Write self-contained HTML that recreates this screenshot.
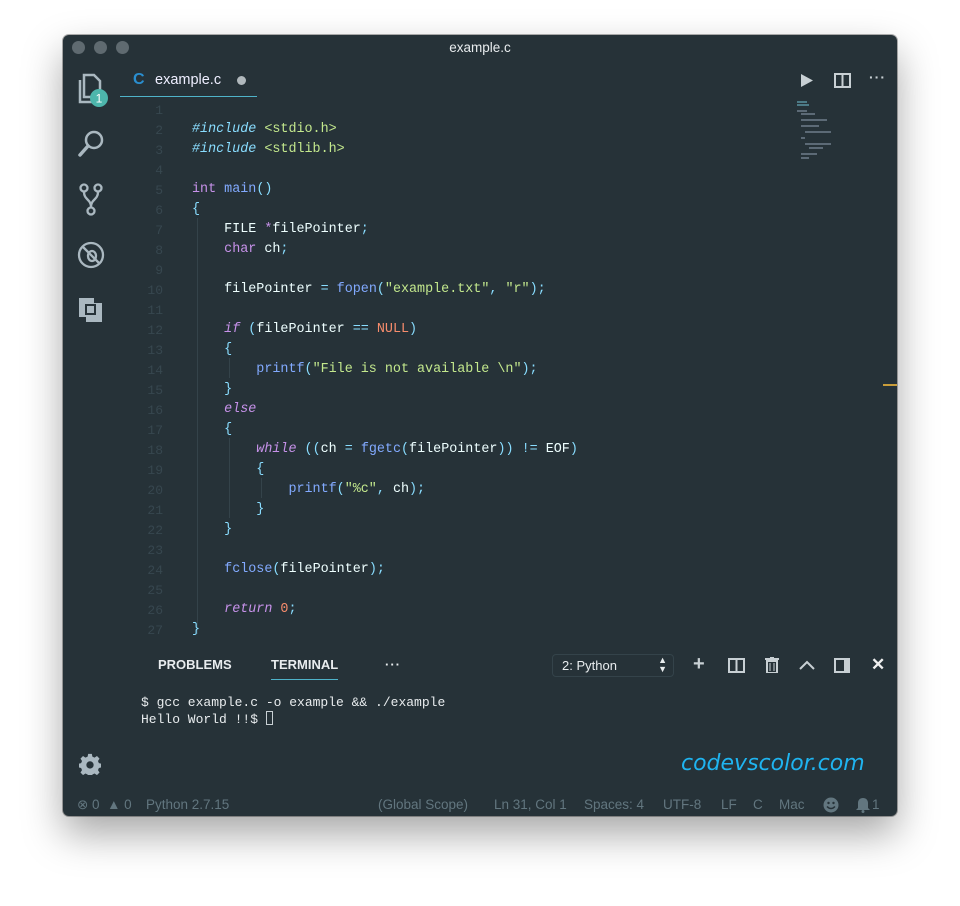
<!DOCTYPE html>
<html><head><meta charset="utf-8"><style>
*{margin:0;padding:0;box-sizing:border-box}
body{width:960px;height:906px;background:#fff;position:relative;overflow:hidden;font-family:"Liberation Sans",sans-serif}
#win{position:absolute;left:63px;top:35px;width:834px;height:781px;background:#263238;border-radius:6px;box-shadow:0 18px 40px rgba(0,0,0,.35),0 0 0 1px rgba(0,0,0,.3);overflow:hidden}
.dot{position:absolute;top:6px;width:13px;height:13px;border-radius:50%;background:#5f6a70}
.title{position:absolute;top:5px;left:0;width:834px;text-align:center;color:#e8ecee;font-size:13.5px}
.ab{position:absolute}
.code{position:absolute;left:0;top:3px;font-family:"Liberation Mono",monospace;font-size:13.4px;color:#eeffff}
.ln{position:absolute;left:60px;width:40px;text-align:right;color:#37474f;font-family:"Liberation Mono",monospace;font-size:13px}
.cl{position:absolute;left:129px;white-space:pre}
.k{color:#c792ea;font-style:italic}.t{color:#c792ea}.c{color:#89ddff}.ci{color:#89ddff;font-style:italic}.s{color:#c3e88d}.f{color:#82aaff}.o{color:#f78c6c}
.guide{position:absolute;width:1px;background:#34434a}
.st{position:absolute;top:762px;color:#62767f;font-size:13.5px}
.ph{position:absolute;top:622px;font-size:13px;font-weight:bold;color:#e8ecee}
.term{position:absolute;left:78px;font-family:"Liberation Mono",monospace;font-size:13px;color:#e8ecee;white-space:pre}
</style></head><body>
<div id="win">
<div class="dot" style="left:9px"></div><div class="dot" style="left:31px"></div><div class="dot" style="left:53px"></div>
<div class="title">example.c</div>

<svg class="ab" style="left:14px;top:36px" width="34" height="40" viewBox="0 0 34 40"><path d="M7 4h10l6 6v16H7z M3 9v22h16" fill="none" stroke="#aab8c0" stroke-width="2.5"/><circle cx="22" cy="27" r="9" fill="#4db6ac"/><text x="22" y="31.5" font-size="12" fill="#fff" text-anchor="middle" font-family="Liberation Sans">1</text></svg>
<svg class="ab" style="left:14px;top:94px" width="30" height="30"><circle cx="17" cy="11" r="8" fill="none" stroke="#aab8c0" stroke-width="2.5"/><path d="M11 17L3 26" stroke="#aab8c0" stroke-width="3.5" stroke-linecap="round"/></svg>
<svg class="ab" style="left:16px;top:148px" width="26" height="34"><g fill="none" stroke="#aab8c0" stroke-width="2.3"><circle cx="5" cy="5" r="3.5"/><circle cx="19" cy="5" r="3.5"/><circle cx="12" cy="28" r="3.5"/><path d="M5 9c0 8 7 7 7 15M19 9c0 8-7 7-7 15"/></g></svg>
<svg class="ab" style="left:14px;top:206px" width="28" height="28"><g fill="none" stroke="#aab8c0" stroke-width="2.3"><circle cx="14" cy="14" r="12"/><path d="M5 5l18 18"/><ellipse cx="15" cy="15" rx="4" ry="5"/></g></svg>
<svg class="ab" style="left:15px;top:262px" width="26" height="26"><path d="M1 1h15v5h8v19H8v-5H1z" fill="#aab8c0"/><rect x="7" y="7" width="11" height="11" fill="#263238"/><rect x="9" y="9" width="7" height="7" fill="#aab8c0"/></svg>
<svg class="ab" style="left:16px;top:718px" width="22" height="22" viewBox="0 0 24 24"><path fill="#aab8c0" d="M10 1h4l.6 3 2.4 1 2.6-1.7 2.8 2.8L20.7 8.7l1 2.4 3 .6v4l-3 .6-1 2.4 1.7 2.6-2.8 2.8-2.6-1.7-2.4 1-.6 3h-4l-.6-3-2.4-1-2.6 1.7-2.8-2.8 1.7-2.6-1-2.4-3-.6v-4l3-.6 1-2.4L1.6 6.1 4.4 3.3 7 5l2.4-1z"/><circle cx="12" cy="13" r="4" fill="#263238"/></svg>

<div style="position:absolute;left:70px;top:36px;font-size:16px;font-weight:bold;color:#2a8fd0">C</div>
<div style="position:absolute;left:92px;top:37px;font-size:14.5px;color:#eef">example.c</div>
<div style="position:absolute;left:174px;top:41px;width:9px;height:9px;border-radius:50%;background:#b0b8bc"></div>
<div style="position:absolute;left:57px;top:61px;width:137px;height:1px;background:#4fb3c9"></div>
<svg style="position:absolute;left:737px;top:38px" width="14" height="15"><path d="M1 1l12 6.5L1 14z" fill="#c8d0d4"/></svg>
<svg style="position:absolute;left:771px;top:38px" width="17" height="15"><path d="M1 1h15v13H1zM8.5 1v13" fill="none" stroke="#c8d0d4" stroke-width="2"/></svg>
<div style="position:absolute;left:806px;top:34px;color:#c8d0d4;font-size:14px;font-weight:bold;letter-spacing:1px">···</div>
<div style="position:absolute;left:820px;top:349px;width:14px;height:2px;background:#c99d3a"></div>

<svg style="position:absolute;left:734px;top:64px" width="60" height="64"><g fill="#8090a0" opacity=".6"><rect x="0" y="2" width="10" height="2" fill="#6ab"/><rect x="0" y="5" width="12" height="2" fill="#6ab"/><rect x="0" y="11" width="10" height="2"/><rect x="4" y="14" width="14" height="2"/><rect x="4" y="20" width="26" height="2"/><rect x="4" y="26" width="18" height="2"/><rect x="8" y="32" width="26" height="2"/><rect x="4" y="38" width="4" height="2"/><rect x="8" y="44" width="26" height="2"/><rect x="12" y="48" width="14" height="2"/><rect x="4" y="54" width="16" height="2"/><rect x="4" y="58" width="8" height="2"/></g></svg>

<div class="guide" style="left:134px;top:183px;height:416px"></div>
<div class="guide" style="left:166px;top:323px;height:20px"></div>
<div class="guide" style="left:166px;top:403px;height:80px"></div>
<div class="guide" style="left:198px;top:443px;height:20px"></div>
<div class="code" id="code"></div>

<div class="ph" style="left:95px">PROBLEMS</div>
<div class="ph" style="left:208px">TERMINAL</div>
<div style="position:absolute;left:208px;top:644px;width:67px;height:1px;background:#4fb3c9"></div>
<div class="ph" style="left:322px;letter-spacing:1px">···</div>
<div style="position:absolute;left:489px;top:619px;width:122px;height:23px;border:1px solid #34434a;border-radius:4px;color:#e8ecee;font-size:13px;padding:3px 9px">2: Python<span style="position:absolute;right:6px;top:1px;font-size:9px;line-height:9px">▲<br>▼</span></div>
<div style="position:absolute;left:630px;top:618px;color:#c8d0d4;font-size:20px;font-weight:bold">+</div>
<svg style="position:absolute;left:665px;top:623px" width="17" height="15"><path d="M1 1h15v13H1zM8.5 1v13" fill="none" stroke="#c8d0d4" stroke-width="2"/></svg>
<svg style="position:absolute;left:702px;top:622px" width="14" height="16"><path d="M0 2h14M5 0h4M2 4h10v12H2z" stroke="#c8d0d4" stroke-width="2" fill="none"/><path d="M5 6v8M9 6v8" stroke="#c8d0d4"/></svg>
<svg style="position:absolute;left:736px;top:625px" width="16" height="10"><path d="M1 9l7-7 7 7" fill="none" stroke="#c8d0d4" stroke-width="2"/></svg>
<svg style="position:absolute;left:771px;top:623px" width="16" height="15"><path d="M1 1h14v13H1z" fill="none" stroke="#c8d0d4" stroke-width="2"/><rect x="10" y="1" width="5" height="13" fill="#c8d0d4"/></svg>
<div style="position:absolute;left:808px;top:620px;color:#f0f0f0;font-size:17px;font-weight:bold">✕</div>
<div class="term" style="top:660px">$ gcc example.c -o example &amp;&amp; ./example</div>
<div class="term" style="top:676px">Hello World !!$ <span style="display:inline-block;width:7px;height:14px;border:1px solid #c8d0d4;vertical-align:-2px"></span></div>
<div style="position:absolute;left:618px;top:716px;color:#1fb4f0;font-size:22px;font-family:'DejaVu Sans',cursive;font-style:italic">codevscolor.com</div>

<div class="st" style="left:14px">⊗ 0 &nbsp;▲ 0</div>
<div class="st" style="left:83px">Python 2.7.15</div>
<div class="st" style="left:315px">(Global Scope)</div>
<div class="st" style="left:431px">Ln 31, Col 1</div>
<div class="st" style="left:521px">Spaces: 4</div>
<div class="st" style="left:600px">UTF-8</div>
<div class="st" style="left:658px">LF</div>
<div class="st" style="left:690px">C</div>
<div class="st" style="left:716px">Mac</div>
<svg style="position:absolute;left:760px;top:762px" width="16" height="16"><circle cx="8" cy="8" r="7.5" fill="#62767f"/><circle cx="5.5" cy="6" r="1.2" fill="#263238"/><circle cx="10.5" cy="6" r="1.2" fill="#263238"/><path d="M4 9.5q4 4 8 0" stroke="#263238" stroke-width="1.5" fill="none"/></svg>
<svg style="position:absolute;left:793px;top:762px" width="14" height="16"><path d="M7 1c3 0 5 2 5 5v5l2 2H0l2-2V6c0-3 2-5 5-5z" fill="#62767f"/><circle cx="7" cy="14.5" r="1.5" fill="#62767f"/></svg>
<div class="st" style="left:809px">1</div>
</div>
<script>
const L=[
'',
'<span class="ci">#include</span> <span class="s">&lt;stdio.h&gt;</span>',
'<span class="ci">#include</span> <span class="s">&lt;stdlib.h&gt;</span>',
'',
'<span class="t">int</span> <span class="f">main</span><span class="c">()</span>',
'<span class="c">{</span>',
'    FILE <span class="t">*</span>filePointer<span class="c">;</span>',
'    <span class="t">char</span> ch<span class="c">;</span>',
'',
'    filePointer <span class="c">=</span> <span class="f">fopen</span><span class="c">(</span><span class="s">"example.txt"</span><span class="c">,</span> <span class="s">"r"</span><span class="c">);</span>',
'',
'    <span class="k">if</span> <span class="c">(</span>filePointer <span class="c">==</span> <span class="o">NULL</span><span class="c">)</span>',
'    <span class="c">{</span>',
'        <span class="f">printf</span><span class="c">(</span><span class="s">"File is not available \\n"</span><span class="c">);</span>',
'    <span class="c">}</span>',
'    <span class="k">else</span>',
'    <span class="c">{</span>',
'        <span class="k">while</span> <span class="c">((</span>ch <span class="c">=</span> <span class="f">fgetc</span><span class="c">(</span>filePointer<span class="c">))</span> <span class="c">!=</span> EOF<span class="c">)</span>',
'        <span class="c">{</span>',
'            <span class="f">printf</span><span class="c">(</span><span class="s">"%c"</span><span class="c">,</span> ch<span class="c">);</span>',
'        <span class="c">}</span>',
'    <span class="c">}</span>',
'',
'    <span class="f">fclose</span><span class="c">(</span>filePointer<span class="c">);</span>',
'',
'    <span class="k">return</span> <span class="o">0</span><span class="c">;</span>',
'<span class="c">}</span>'];
let h='';L.forEach((l,i)=>{const y=65+20*i;h+='<div class="ln" style="top:'+y+'px">'+(i+1)+'</div><div class="cl" style="top:'+(y-1)+'px">'+l+'</div>';});
document.getElementById('code').innerHTML=h;
</script>
</body></html>
